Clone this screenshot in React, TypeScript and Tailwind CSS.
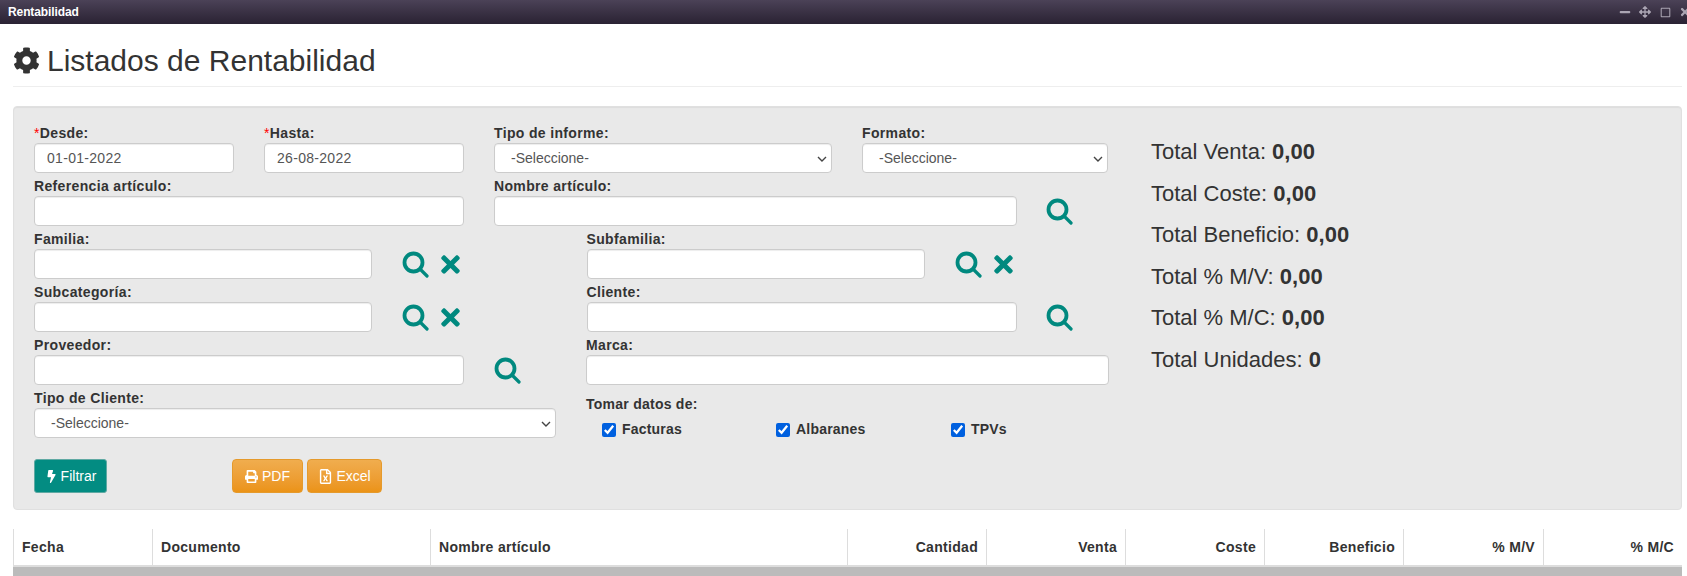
import type { ReactNode } from "react";
import {
  FaArrowsAlt,
  FaBolt,
  FaCog,
  FaMinus,
  FaPrint,
  FaRegFileExcel,
  FaRegSquare,
  FaTimes,
} from "react-icons/fa";

const labelCls = "block h-[22px] pt-[3px] text-[14px] leading-[18px] font-bold tracking-[0.35px] text-[#333]";
const fieldCls =
  "mb-[1px] block h-[30px] w-full rounded-[4px] border border-[#ccc] bg-white px-3 text-[14px] text-[#555] shadow-[inset_0_1px_1px_rgba(0,0,0,0.075)] outline-none";

function SearchIcon() {
  return (
    <svg width="27" height="27" viewBox="0 0 27 27" fill="none" stroke="#00897f" strokeLinecap="round">
      <circle cx="11.5" cy="11.5" r="9" strokeWidth="3.8" />
      <path d="M18 18l7 7" strokeWidth="3.2" />
    </svg>
  );
}

function Field({ label, width, req, children }: { label: string; width: string; req?: boolean; children?: ReactNode }) {
  return (
    <div className={width}>
      <label className={labelCls}>
        {req && <span className="font-normal text-[#f00]">*</span>}
        {label}
      </label>
      {children ?? <input type="text" className={fieldCls} />}
    </div>
  );
}

function Picker() {
  return (
    <div className="relative">
      <select className={fieldCls + " appearance-none pl-[16px]"}>
        <option>-Seleccione-</option>
      </select>
      <svg
        width="10"
        height="6"
        viewBox="0 0 10 6"
        fill="none"
        stroke="#444"
        strokeWidth="1.4"
        className="pointer-events-none absolute right-[5px] top-[13px]"
      >
        <path d="M1 1l4 4 4-4" />
      </svg>
    </div>
  );
}

function IconBtns({ close, ml }: { close?: boolean; ml: string }) {
  return (
    <div className={`mb-[1px] flex h-[30px] items-center gap-[8px] self-end ${ml}`}>
      <SearchIcon />
      {close && <FaTimes className="text-[27px] text-[#00897f]" />}
    </div>
  );
}

function Check({ label, width }: { label: string; width: string }) {
  return (
    <label className={`flex items-center gap-[6px] text-[14px] font-bold tracking-[0.2px] text-[#333] ${width}`}>
      <input type="checkbox" defaultChecked className="h-[14px] w-[14px] accent-[#0060df]" />
      {label}
    </label>
  );
}

const totals = [
  ["Total Venta", "0,00"],
  ["Total Coste", "0,00"],
  ["Total Beneficio", "0,00"],
  ["Total % M/V", "0,00"],
  ["Total % M/C", "0,00"],
  ["Total Unidades", "0"],
];

const columns = [
  { name: "Fecha", w: "w-[139px]" },
  { name: "Documento", w: "w-[278px]" },
  { name: "Nombre artículo", w: "w-[417px]" },
  { name: "Cantidad", w: "w-[139px]", right: true },
  { name: "Venta", w: "w-[139px]", right: true },
  { name: "Coste", w: "w-[139px]", right: true },
  { name: "Beneficio", w: "w-[139px]", right: true },
  { name: "% M/V", w: "w-[140px]", right: true },
  { name: "% M/C", w: "w-[139px]", right: true },
];

export default function App() {
  return (
    <div className="h-[576px] overflow-hidden bg-white font-['Liberation_Sans',Arial,sans-serif] text-[#333]">
      <div className="flex h-[24px] items-center justify-between bg-gradient-to-b from-[#4b4257] to-[#2a2233] pl-2">
        <span className="text-[12px] font-bold tracking-[-0.1px] text-white">Rentabilidad</span>
        <div className="flex translate-x-[8px] items-center text-[#aba5b3]">
          <span className="flex w-[20px] justify-center text-[12px]">
            <FaMinus />
          </span>
          <span className="flex w-[20px] justify-center text-[12px]">
            <FaArrowsAlt />
          </span>
          <span className="flex w-[20px] justify-center text-[11px]">
            <FaRegSquare />
          </span>
          <span className="flex w-[20px] justify-center text-[12px]">
            <FaTimes />
          </span>
        </div>
      </div>

      <div className="ml-[13px] mr-[5px]">
        <h1 className="flex h-[63px] items-center gap-[7px] border-b border-[#eee] pt-[11px] text-[30px] leading-none text-[#333]">
          <FaCog className="text-[27px]" />
          Listados de Rentabilidad
        </h1>

        <div className="mt-[19px] flex h-[404px] rounded-[4px] border border-[#e0e0e0] bg-[#e9e9e9] pl-[20px] pt-[14px] shadow-[inset_0_1px_1px_rgba(0,0,0,0.05)]">
          <div className="w-[1117px]">
            <div className="flex">
              <Field label="Desde:" req width="w-[200px]">
                <input type="text" defaultValue="01-01-2022" className={fieldCls + " tracking-[0.3px]"} />
              </Field>
              <Field label="Hasta:" req width="ml-[30px] w-[200px]">
                <input type="text" defaultValue="26-08-2022" className={fieldCls + " tracking-[0.3px]"} />
              </Field>
              <Field label="Tipo de informe:" width="ml-[30px] w-[338px]">
                <Picker />
              </Field>
              <Field label="Formato:" width="ml-[30px] w-[246px]">
                <Picker />
              </Field>
            </div>
            <div className="flex">
              <Field label="Referencia artículo:" width="w-[430px]" />
              <Field label="Nombre artículo:" width="ml-[30px] w-[523px]" />
              <IconBtns ml="ml-[29px]" />
            </div>
            <div className="flex">
              <Field label="Familia:" width="w-[338px]" />
              <IconBtns close ml="ml-[30px]" />
              <Field label="Subfamilia:" width="ml-[122.5px] w-[338px]" />
              <IconBtns close ml="ml-[30px]" />
            </div>
            <div className="flex">
              <Field label="Subcategoría:" width="w-[338px]" />
              <IconBtns close ml="ml-[30px]" />
              <Field label="Cliente:" width="ml-[122.5px] w-[430px]" />
              <IconBtns ml="ml-[29px]" />
            </div>
            <div className="flex">
              <Field label="Proveedor:" width="w-[430px]" />
              <IconBtns ml="ml-[30px]" />
              <Field label="Marca:" width="ml-[65px] w-[523px]" />
            </div>
            <div className="flex">
              <Field label="Tipo de Cliente:" width="w-[522px]">
                <Picker />
              </Field>
              <div className="ml-[30px]">
                <div className="mt-[8px] text-[14px] font-bold leading-[20px] tracking-[0.25px]">Tomar datos de:</div>
                <div className="mt-[5px] flex pl-[16px]">
                  <Check label="Facturas" width="w-[174px]" />
                  <Check label="Albaranes" width="w-[175px]" />
                  <Check label="TPVs" width="w-[100px]" />
                </div>
              </div>
            </div>
            <div className="mt-[19px] flex">
              <button className="flex h-[34px] w-[73px] items-center justify-center gap-[3px] rounded-[3px] border border-[#5fa9a3] bg-[#038c82] text-[14px] text-white">
                <FaBolt className="text-[13px]" />
                Filtrar
              </button>
              <button className="ml-[125px] flex h-[34px] w-[71px] items-center justify-center gap-[4px] rounded-[4px] border border-[#e59a2c] bg-gradient-to-b from-[#f0ad4e] to-[#eb9316] text-[14px] text-white">
                <FaPrint className="text-[13px]" />
                PDF
              </button>
              <button className="ml-[4px] flex h-[34px] w-[75px] items-center justify-center gap-[3px] rounded-[4px] border border-[#e59a2c] bg-gradient-to-b from-[#f0ad4e] to-[#eb9316] text-[14px] text-white">
                <FaRegFileExcel className="text-[15px]" />
                Excel
              </button>
            </div>
          </div>

          <div className="flex flex-col gap-[15.5px] pt-[18px]">
            {totals.map(([name, value]) => (
              <div key={name} className="text-[22px] leading-[26px] text-[#333]">
                {name}: <b>{value}</b>
              </div>
            ))}
          </div>
        </div>

        <div className="mt-[19px] flex h-[38px] border-b-2 border-[#ddd] pl-0">
          {columns.map((c) => (
            <div
              key={c.name}
              className={`flex items-center border-l border-[#ddd] px-2 text-[14px] font-bold tracking-[0.3px] text-[#333] ${c.w} ${
                c.right ? "justify-end" : ""
              }`}
            >
              {c.name}
            </div>
          ))}
        </div>
        <div className="h-[20px] bg-[#bbb]" />
      </div>
    </div>
  );
}
